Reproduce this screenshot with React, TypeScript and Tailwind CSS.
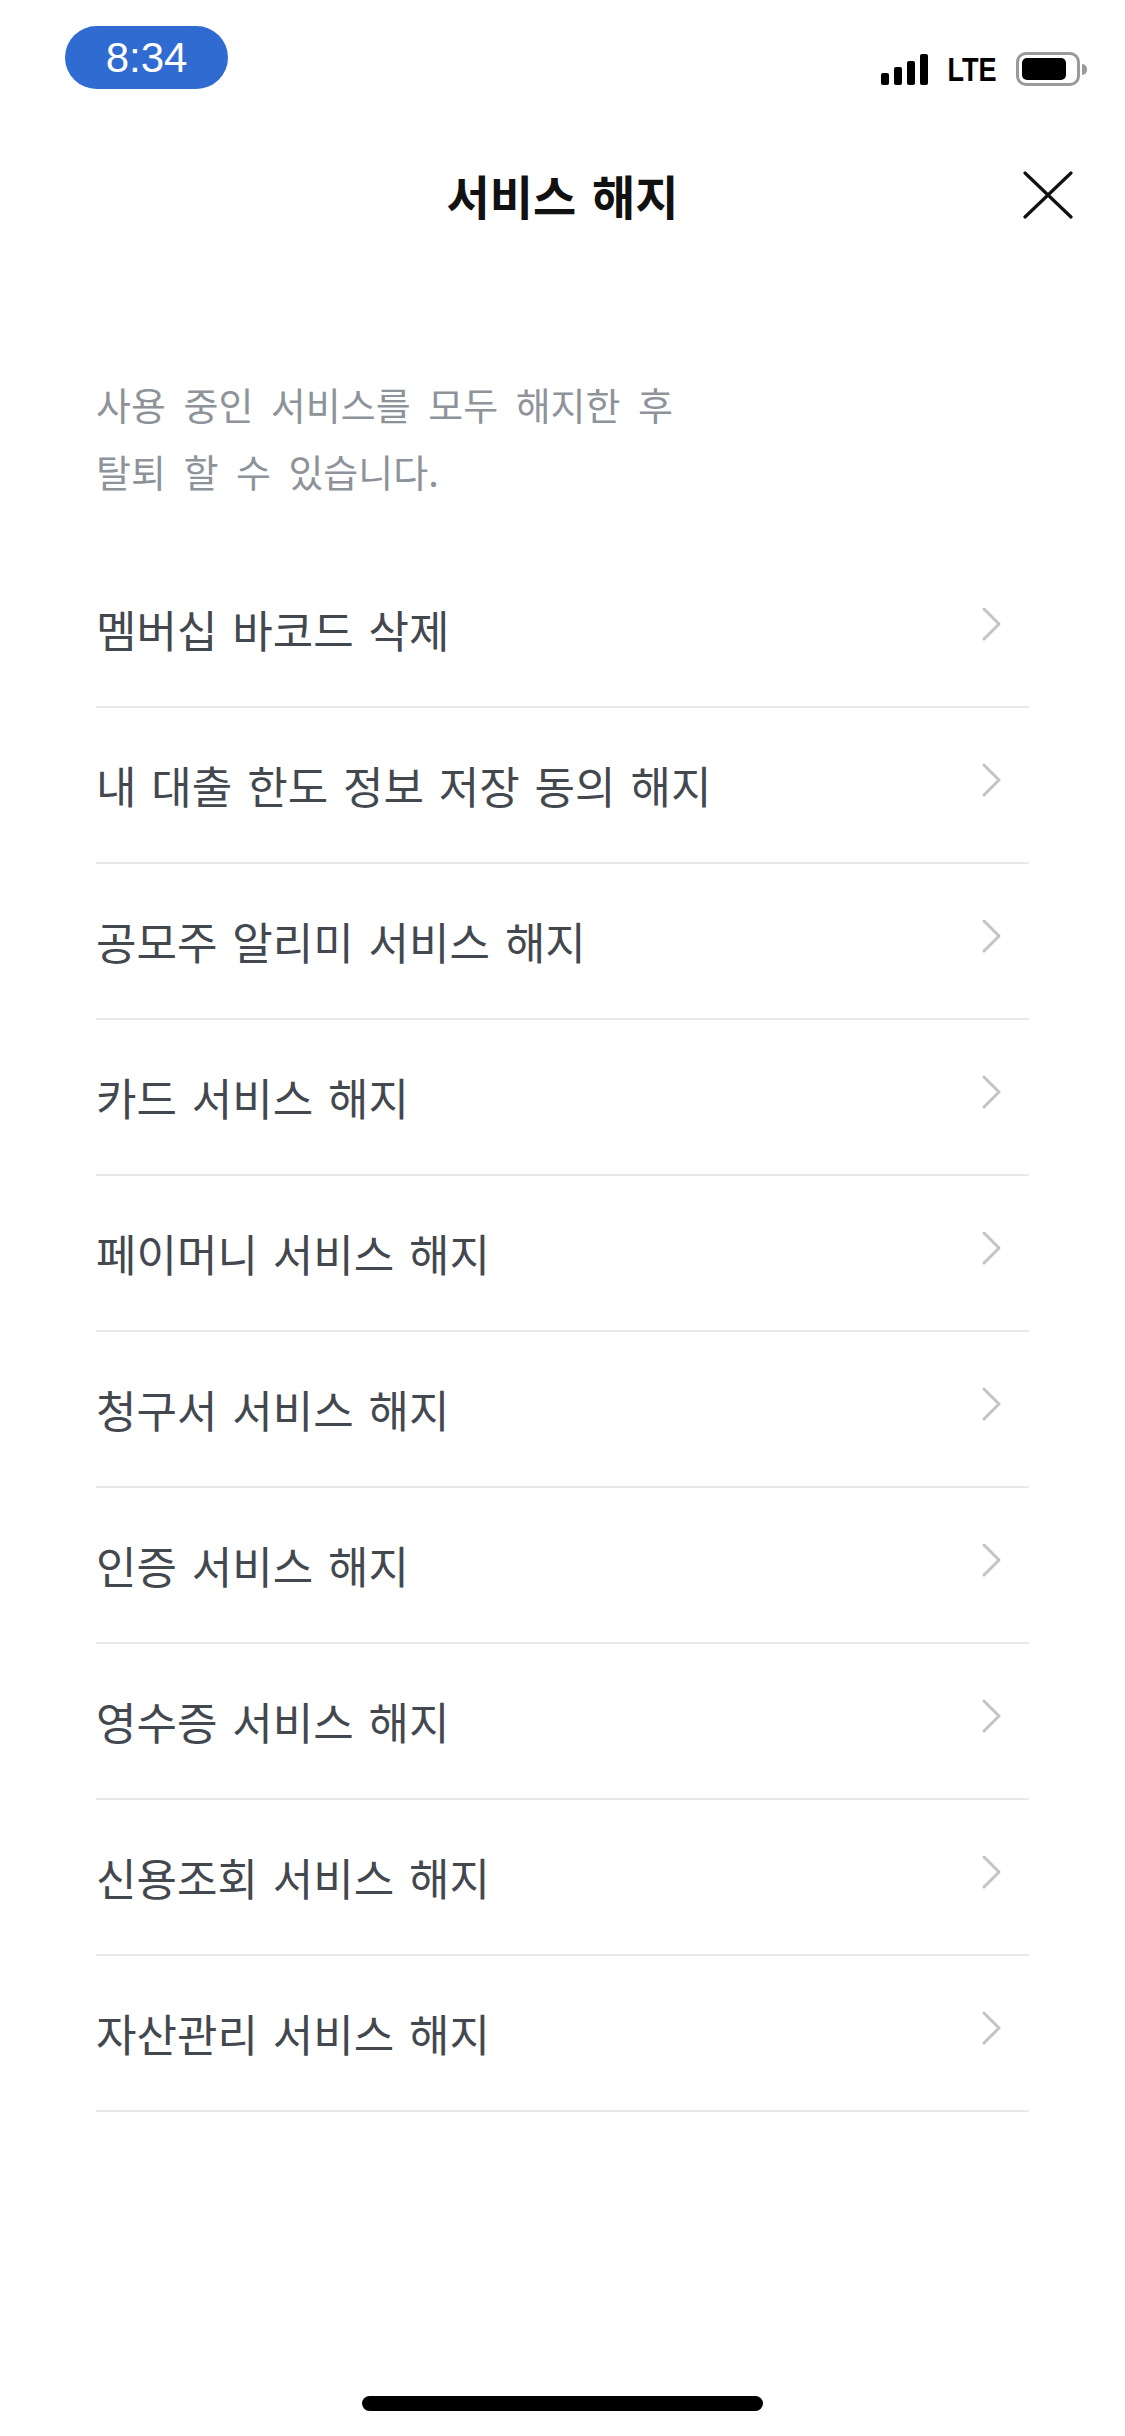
const items = [
  '멤버십 바코드 삭제',
  '내 대출 한도 정보 저장 동의 해지',
  '공모주 알리미 서비스 해지',
  '카드 서비스 해지',
  '페이머니 서비스 해지',
  '청구서 서비스 해지',
  '인증 서비스 해지',
  '영수증 서비스 해지',
  '신용조회 서비스 해지',
  '자산관리 서비스 해지',
];

const kr = "font-['Noto_Sans_CJK_KR','Noto_Sans',sans-serif]";

function StatusBar() {
  return (
    <div className="flex h-[130px] justify-between px-[65px] pr-[38px]">
      <div className="mt-[26px] flex h-[63px] w-[163px] items-center justify-center rounded-full bg-[#2f6bd0]">
        <span className="font-['Liberation_Sans',sans-serif] text-[42px] leading-none text-white">8:34</span>
      </div>
      <div className="mt-[52px] flex h-[34px] items-center gap-[14px]">
        <div className="flex items-end gap-[5px]">
          <div className="h-[12px] w-[8px] rounded-[2px] bg-black" />
          <div className="h-[18px] w-[8px] rounded-[2px] bg-black" />
          <div className="h-[24px] w-[8px] rounded-[2px] bg-black" />
          <div className="h-[31px] w-[8px] rounded-[2px] bg-black" />
        </div>
        <span className="font-['Liberation_Sans',sans-serif] text-[33px] font-bold leading-none text-black scale-x-[0.82]">LTE</span>
        <div className="flex items-center gap-[2px]">
          <div className="flex h-[34px] w-[64px] items-center rounded-[10px] border-[3px] border-[#9a9a9a] p-[3px]">
            <div className="h-full w-[44px] rounded-[5px] bg-black" />
          </div>
          <div className="h-[11px] w-[5px] rounded-r-full bg-[#9a9a9a]" />
        </div>
      </div>
    </div>
  );
}

function CloseIcon() {
  return (
    <svg width="50" height="48" viewBox="0 0 50 48" fill="none">
      <path d="M2 2 L48 46 M48 2 L2 46" stroke="#111" strokeWidth="3.2" strokeLinecap="round" />
    </svg>
  );
}

function Chevron() {
  return (
    <svg width="20" height="34" viewBox="0 0 20 34" fill="none" className="mr-[27px] -mt-[10px]">
      <path d="M2 2 L17 17 L2 32" stroke="#c4c4c4" strokeWidth="3" strokeLinecap="round" strokeLinejoin="round" />
    </svg>
  );
}

export default function App() {
  return (
    <div className={`min-h-[2436px] w-[1125px] bg-white ${kr}`}>
      <StatusBar />

      <div className="relative flex h-[130px] items-center justify-center">
        <h1 className="text-[47px] font-bold text-[#111] [word-spacing:5px]">서비스 해지</h1>
        <button className="absolute right-[52px] top-1/2 -translate-y-1/2">
          <CloseIcon />
        </button>
      </div>

      <div className="px-[96px] pt-[110px]">
        <p className="text-[38px] leading-[67px] text-[#8e939a] [word-spacing:9px]">
          사용 중인 서비스를 모두 해지한 후
          <br />
          탈퇴 할 수 있습니다.
        </p>

        <ul className="mt-[48px]">
          {items.map((label) => (
            <li
              key={label}
              className="flex h-[156px] items-center justify-between border-b-2 border-[#e8e8ec]"
            >
              <span className="text-[44px] text-[#43484f] [word-spacing:5px]">{label}</span>
              <Chevron />
            </li>
          ))}
        </ul>
      </div>

      <div className="flex justify-center pt-[284px]">
        <div className="h-[15px] w-[401px] rounded-full bg-black" />
      </div>
    </div>
  );
}
